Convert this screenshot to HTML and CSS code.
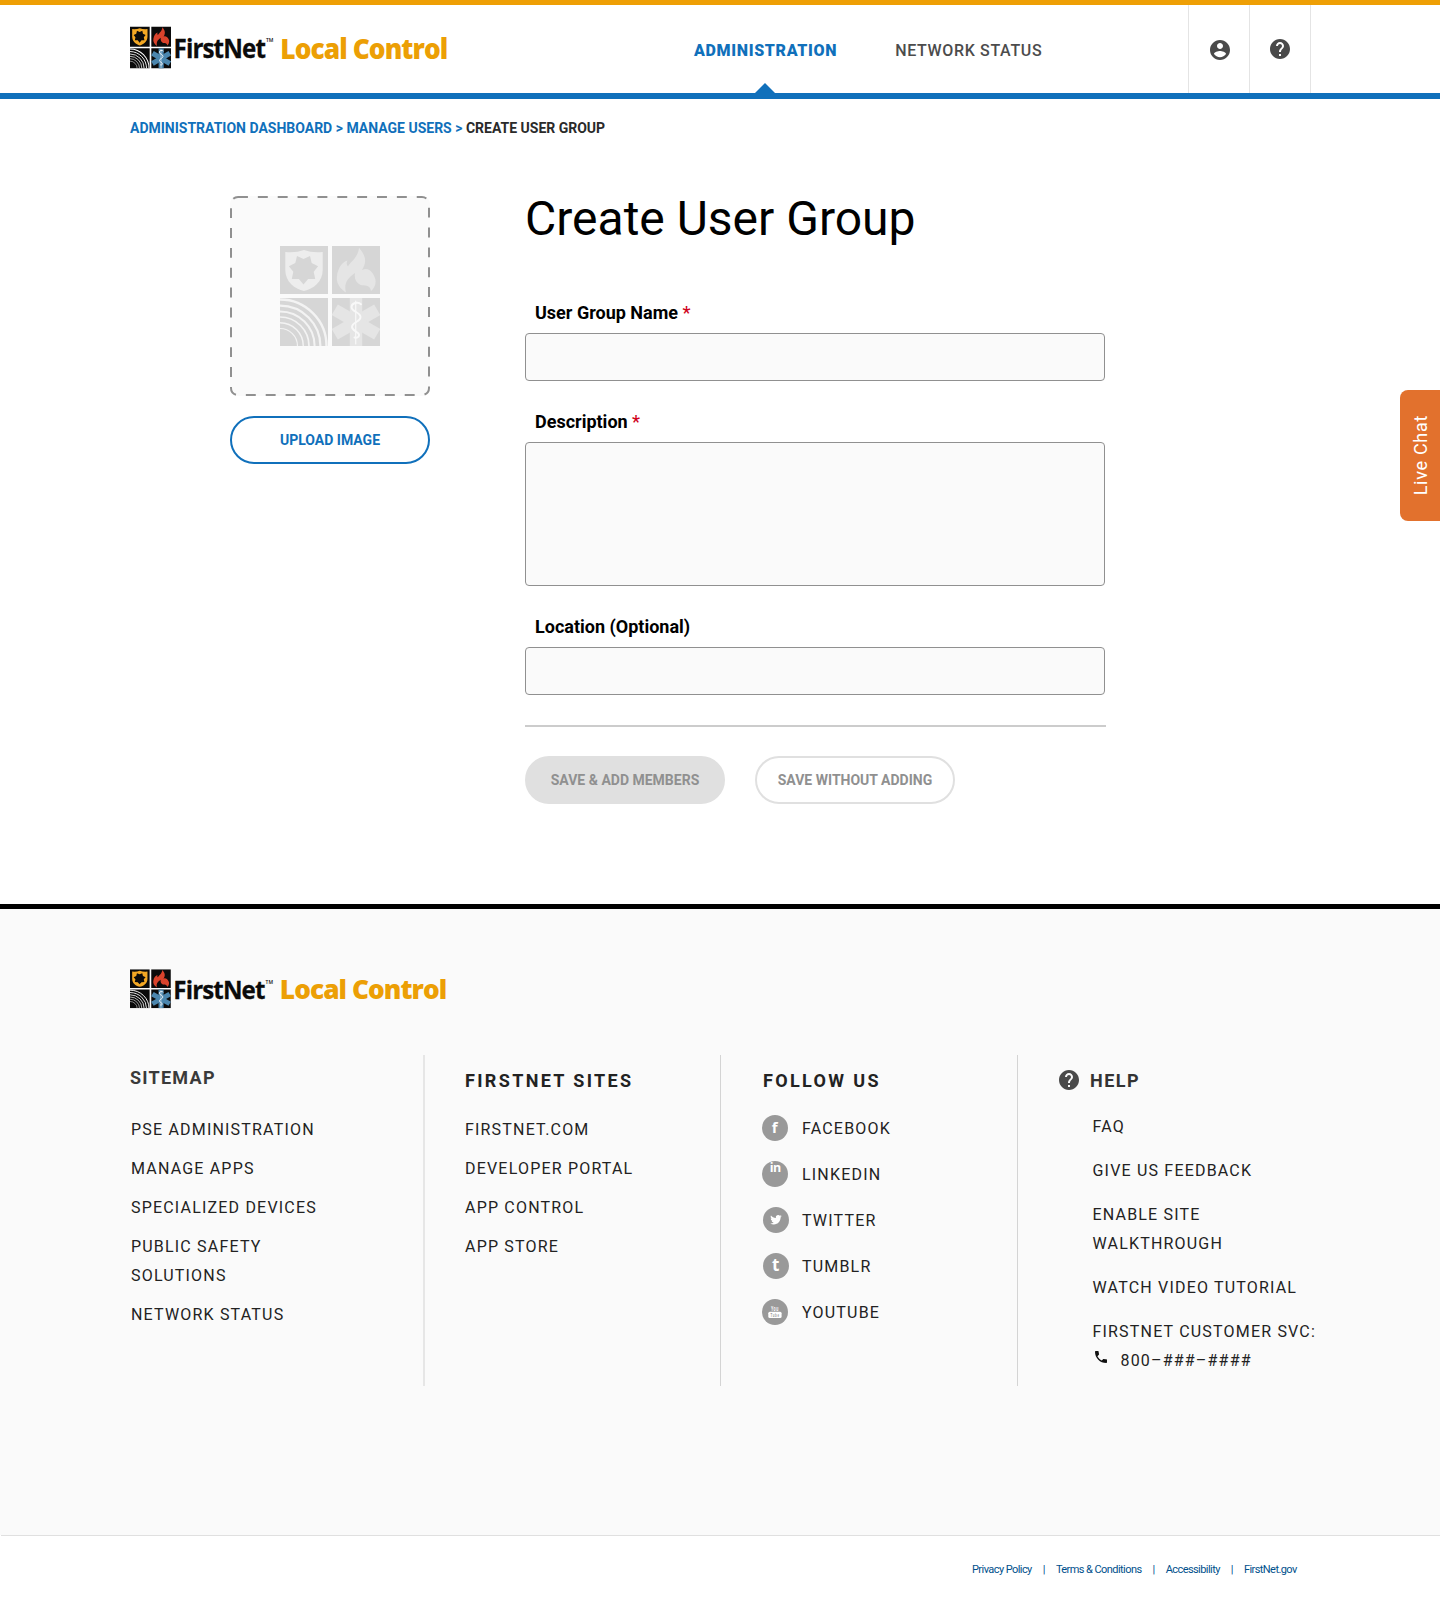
FILE: index.html
```html
<!DOCTYPE html>
<html lang="en">
<head>
<meta charset="utf-8">
<title>Create User Group</title>
<link rel="stylesheet" href="styles.css">
</head>
<body>
<svg class="sprite" aria-hidden="true">
  <symbol id="mark" viewBox="0 0 100 100" preserveAspectRatio="none">
    <g class="mark-tile"><path d="M0 0h48v48H0zM52 0h48v48H52zM0 52h48v48H0zM52 52h48v48H52z"/></g>
    <path class="mark-shield" d="M5.3 6Q16 7 24 4Q32 7 42.7 6V24C42.7 36 33 43 24 45C15 43 5.3 36 5.3 24Z"/>
    <path class="mark-tile" d="M23.5 38.5L28.1 33L35.2 32.9L33.7 25.8L38.1 20.2L31.7 17L30 10L23.5 13L17 10L15.3 17L8.9 20.2L13.3 25.8L11.8 32.9L18.9 33Z"/>
    <path class="mark-flame" d="M79 1.7C86 10 87 16 82 24C89 20 94 28 95.3 33C96.5 38 94 43 91 45C90 38 84 40 80.5 39C76 37 74 33 75 27C66 33 64 39 66 46.5C59 42 56 36 57 30C58 22 62 16 67.5 14.5C66 17 67 19 68 20.5C70 16 78 12 79 1.7Z"/>
    <g class="mark-wave">
      <path stroke-width="1.2" d="M0 82.5A17.5 17.5 0 0 1 17.5 100"/>
      <path stroke-width="1.4" d="M0 76.7A23.3 23.3 0 0 1 23.3 100"/>
      <path stroke-width="1.7" d="M0 71A29 29 0 0 1 29 100"/>
      <path stroke-width="2" d="M0 65.4A34.6 34.6 0 0 1 34.6 100"/>
      <path stroke-width="2.2" d="M0 59.6A40.4 40.4 0 0 1 40.4 100"/>
      <path stroke-width="2.4" d="M0 53.5A46.5 46.5 0 0 1 46.5 100"/>
    </g>
    <g class="mark-star">
      <rect x="69.8" y="52" width="12.4" height="48"/>
      <rect x="69.8" y="51.5" width="12.4" height="49" transform="rotate(60 76 76)"/>
      <rect x="69.8" y="51.5" width="12.4" height="49" transform="rotate(-60 76 76)"/>
    </g>
    <g class="mark-snake">
      <path stroke-width="1.2" d="M75.7 55V98"/>
      <path stroke-width="2" d="M81 58.2C78 55.5 71.5 57 71.5 61C71.5 66 80.5 66 80.5 71C80.5 76 72 76 72 81C72 85 79 85.5 79 89C79 91.5 76.5 92 74.5 91.5"/>
    </g>
  </symbol>
  <symbol id="help" viewBox="2 2 20 20"><path d="M12 2C6.48 2 2 6.48 2 12s4.48 10 10 10 10-4.48 10-10S17.52 2 12 2zm1 17h-2v-2h2v2zm2.07-7.75l-.9.92C13.45 12.9 13 13.5 13 15h-2v-.5c0-1.1.45-2.1 1.17-2.83l1.24-1.26c.37-.36.59-.86.59-1.41 0-1.1-.9-2-2-2s-2 .9-2 2H8c0-2.21 1.79-4 4-4s4 1.79 4 4c0 .88-.36 1.68-.93 2.25z"/></symbol>
</svg>

<header class="header">
  <a class="brand">
    <svg class="logo" viewBox="0 0 325 50" preserveAspectRatio="none">
      <use class="mark-color" href="#mark" x="0" y="3.5" width="41" height="42"/>
      <text class="logo-name" x="43.5" y="35" textLength="91.5" lengthAdjust="spacingAndGlyphs">FirstNet</text>
      <text class="logo-tm" x="136" y="19">TM</text>
      <text class="logo-product" x="150.3" y="35.5" textLength="167" lengthAdjust="spacingAndGlyphs">Local Control</text>
    </svg>
  </a>
  <nav class="nav">
    <a class="nav-item nav-item-active">ADMINISTRATION</a>
    <a class="nav-item">NETWORK STATUS</a>
  </nav>
  <div class="tools">
    <a class="tool"><svg class="icon20 icon-user" viewBox="2 2 20 20"><path d="M12 2C6.48 2 2 6.48 2 12s4.48 10 10 10 10-4.48 10-10S17.52 2 12 2zm0 3c1.66 0 3 1.34 3 3s-1.34 3-3 3-3-1.34-3-3 1.34-3 3-3zm0 14.2c-2.5 0-4.71-1.28-6-3.22.03-1.99 4-3.08 6-3.08 1.99 0 5.97 1.09 6 3.08-1.29 1.94-3.5 3.22-6 3.22z"/></svg></a>
    <a class="tool"><svg class="icon20 icon-help"><use href="#help"/></svg></a>
  </div>
</header>

<main class="main">
  <div class="crumbs"><a>ADMINISTRATION DASHBOARD</a> <a>&gt;</a> <a>MANAGE USERS</a> <a>&gt;</a> <span>CREATE USER GROUP</span></div>
  <div class="content">
    <aside class="picture">
      <div class="drop">
        <svg class="drop-frame" viewBox="0 0 200 200"><rect x="1" y="1" width="198" height="198" rx="7"/></svg>
        <svg class="drop-mark mark-gray"><use href="#mark" width="100" height="100"/></svg>
      </div>
      <button class="btn btn-primary">UPLOAD IMAGE</button>
    </aside>
    <form class="form">
      <h1>Create User Group</h1>
      <label>User Group Name <i>*</i></label>
      <input type="text">
      <label>Description <i>*</i></label>
      <textarea></textarea>
      <label>Location (Optional)</label>
      <input type="text">
      <hr>
      <div class="actions">
        <button class="btn btn-filled">SAVE &amp; ADD MEMBERS</button>
        <button class="btn btn-ghost">SAVE WITHOUT ADDING</button>
      </div>
    </form>
  </div>
</main>

<footer class="footer">
  <svg class="logo logo-footer" viewBox="0 0 325 50" preserveAspectRatio="none">
    <use class="mark-color" href="#mark" x="0" y="3.5" width="41" height="42"/>
    <text class="logo-name" x="43.5" y="35" textLength="91.5" lengthAdjust="spacingAndGlyphs">FirstNet</text>
    <text class="logo-tm" x="136" y="19">TM</text>
    <text class="logo-product" x="150.3" y="35.5" textLength="167" lengthAdjust="spacingAndGlyphs">Local Control</text>
  </svg>
  <div class="cols">
    <section class="col col-sitemap">
      <h2>SITEMAP</h2>
      <ul>
        <li>PSE ADMINISTRATION</li>
        <li>MANAGE APPS</li>
        <li>SPECIALIZED DEVICES</li>
        <li>PUBLIC SAFETY<br>SOLUTIONS</li>
        <li>NETWORK STATUS</li>
      </ul>
    </section>
    <section class="col col-sites">
      <h2>FIRSTNET SITES</h2>
      <ul>
        <li>FIRSTNET.COM</li>
        <li>DEVELOPER PORTAL</li>
        <li>APP CONTROL</li>
        <li>APP STORE</li>
      </ul>
    </section>
    <section class="col col-follow">
      <h2>FOLLOW US</h2>
      <ul>
        <li><svg class="social" viewBox="0 0 26 26"><circle cx="13" cy="13" r="13"/><text class="glyph-f" x="9.8" y="18">f</text></svg>FACEBOOK</li>
        <li><svg class="social" viewBox="0 0 26 26"><circle cx="13" cy="13" r="13"/><text class="glyph-in" x="7.8" y="11">in</text></svg>LINKEDIN</li>
        <li><svg class="social social-shift" viewBox="0 0 26 26"><circle cx="13" cy="13" r="13"/><path transform="translate(7.2 7) scale(.48)" d="M23.95 4.57a10 10 0 0 1-2.82.77 4.96 4.96 0 0 0 2.16-2.72c-.95.55-2 .95-3.13 1.18a4.92 4.92 0 0 0-8.38 4.48C7.69 8.09 4.07 6.13 1.64 3.16a4.82 4.82 0 0 0-.67 2.48c0 1.7.87 3.21 2.19 4.1a4.9 4.9 0 0 1-2.23-.62v.06a4.92 4.92 0 0 0 3.95 4.83 4.96 4.96 0 0 1-2.21.08 4.94 4.94 0 0 0 4.6 3.42A9.87 9.87 0 0 1 0 19.54a14 14 0 0 0 7.55 2.21c9.05 0 14-7.5 14-13.98 0-.21 0-.42-.02-.63a9.94 9.94 0 0 0 2.42-2.57z"/></svg>TWITTER</li>
        <li><svg class="social social-shift" viewBox="0 0 26 26"><circle cx="13" cy="13" r="13"/><text class="glyph-t" x="8.9" y="18.3">t</text></svg>TUMBLR</li>
        <li><svg class="social" viewBox="0 0 26 26"><circle cx="13" cy="13" r="13"/><text class="glyph-you" x="9" y="12" textLength="8" lengthAdjust="spacingAndGlyphs">You</text><rect x="6.3" y="12.8" width="13.3" height="6.2" rx="1.5"/><text class="glyph-tube" x="8.6" y="18" textLength="9" lengthAdjust="spacingAndGlyphs">Tube</text></svg>YOUTUBE</li>
      </ul>
    </section>
    <section class="col col-help">
      <h2><svg class="icon20"><use href="#help"/></svg>HELP</h2>
      <ul>
        <li>FAQ</li>
        <li>GIVE US FEEDBACK</li>
        <li>ENABLE SITE<br>WALKTHROUGH</li>
        <li>WATCH VIDEO TUTORIAL</li>
        <li>FIRSTNET CUSTOMER SVC:<div class="phone"><svg viewBox="3 3 18 18"><path d="M6.62 10.79c1.44 2.83 3.76 5.14 6.59 6.59l2.2-2.2c.27-.27.67-.36 1.02-.24 1.12.37 2.33.57 3.57.57.55 0 1 .45 1 1V20c0 .55-.45 1-1 1-9.39 0-17-7.61-17-17 0-.55.45-1 1-1h3.5c.55 0 1 .45 1 1 0 1.25.2 2.45.57 3.57.11.35.03.74-.25 1.02l-2.2 2.2z"/></svg>800–###–####</div></li>
      </ul>
    </section>
  </div>
</footer>

<div class="legal"><a>Privacy Policy</a><span>|</span><a>Terms &amp; Conditions</a><span>|</span><a>Accessibility</a><span>|</span><a>FirstNet.gov</a></div>

<a class="chat"><span>Live Chat</span></a>
</body>
</html>
```
FILE: styles.css
```css
* { box-sizing: border-box; }
body { margin: 0; width: 1440px; height: 1610px; background: #fff; font-family: Roboto, sans-serif; color: #000; overflow: hidden; position: relative; }
h1, h2, ul { margin: 0; padding: 0; }
ul { list-style: none; }
.sprite { position: absolute; width: 0; height: 0; }

/* brand mark */
.mark-color { --tile: #0b0b0b; --shield: #f3a824; --flame: #d9432c; --wave: #fff; --star: #4b86ae; --snake: #fff; }
.mark-gray { --tile: #d6d6d6; --shield: #ededed; --flame: #e5e5e5; --wave: #f3f3f3; --star: #e5e5e5; --snake: #f8f8f8; }
.mark-tile { fill: var(--tile); }
.mark-shield { fill: var(--shield); }
.mark-flame { fill: var(--flame); }
.mark-wave { fill: none; stroke: var(--wave); }
.mark-star { fill: var(--star); }
.mark-snake { fill: none; stroke: var(--snake); stroke-linecap: round; }
.logo { display: block; width: 325px; height: 50px; overflow: visible; }
.logo-name { font: 700 27.5px "Open Sans", sans-serif; letter-spacing: -1px; fill: #0b0b0b; stroke: #0b0b0b; stroke-width: .3; }
.logo-tm { font: 600 5px "Open Sans", sans-serif; fill: #0b0b0b; }
.logo-product { font: 800 28px "Open Sans", sans-serif; letter-spacing: -1px; fill: #ec9f05; }

/* header */
.header { height: 99px; border-top: 5px solid #ee9f05; border-bottom: 6px solid #1070bb; display: flex; padding-left: 130px; }
.brand { width: 564px; padding-top: 18px; }
.nav { display: flex; gap: 58px; width: 494px; }
.nav-item { line-height: 91px; height: 88px; font-size: 16px; font-weight: 500; letter-spacing: .66px; color: #4c4c4c; }
.nav-item-active { font-weight: 900; color: #1070bb; position: relative; }
.nav-item-active::after { content: ""; position: absolute; left: 60.5px; bottom: 0; border: 10px solid transparent; border-top: 0; border-bottom-color: #1070bb; }
.tools { display: flex; }
.tool { width: 61px; border-left: 1px solid #e4e4e4; display: flex; justify-content: center; }
.tool:last-child { width: 62px; border-right: 1px solid #e4e4e4; }
.icon20 { width: 20px; height: 20px; fill: #4a4a4a; }
.icon-user { margin: 34.5px 0 0 2px; }
.icon-help { margin: 33.5px 0 0 0; }

/* main */
.main { height: 805px; padding: 19px 0 0 130px; }
.crumbs { font-size: 14px; line-height: 20px; font-weight: 700; color: #2a2a2a; }
.crumbs a { color: #1070bb; }
.content { display: flex; gap: 95px; padding: 58px 0 0 100px; }
.picture { width: 200px; display: flex; flex-direction: column; gap: 20px; }
.drop { width: 200px; height: 200px; display: grid; place-items: center; background: #fafafa; border-radius: 8px; }
.drop > svg { grid-area: 1 / 1; }
.drop-frame { width: 200px; height: 200px; fill: none; stroke: #909090; stroke-width: 2; stroke-dasharray: 9.93; }
.drop-mark { width: 100px; height: 100px; }
.btn { width: 200px; height: 48px; padding: 0; border-radius: 24px; border: 2px solid; font: 700 14px Roboto, sans-serif; }
.btn-primary { background: #fff; border-color: #1070bb; color: #1070bb; }
.btn-filled { background: #e0e0e0; border-color: #e0e0e0; color: #909090; }
.btn-ghost { background: #fff; border-color: #e0e0e0; color: #909090; }
.form { width: 580px; display: flex; flex-direction: column; }
h1 { font-size: 48px; font-weight: 400; line-height: 56px; margin: -5px 0 52px; }
label { font-size: 18px; font-weight: 700; line-height: 28px; padding-left: 10px; margin-bottom: 6px; height: 28px; }
label i { color: #d0021b; font-style: normal; font-weight: 500; }
input, textarea { display: block; width: 580px; height: 48px; border: 1px solid #909090; border-radius: 4px; background: #fafafa; margin: 0 0 27px; padding: 12px; resize: none; }
textarea { height: 144px; }
input:last-of-type { margin-bottom: 30px; }
hr { width: 581px; height: 2px; border: 0; margin: 0 0 29px; background: #ccc; }
.actions { display: flex; gap: 30px; }

/* footer */
.footer { height: 631px; border-top: 5px solid #000; background: #fafafa; padding: 57px 0 0 130px; color: #222; }
.logo-footer { height: 46.5px; width: 324px; }
.cols { display: grid; grid-template-columns: 295px 296px 297px 1fr; grid-template-rows: 331px; margin-top: 42.5px; }
.col { border-right: 1px solid #d4d4d4; }
.col-sitemap { border-right: 2px solid #e6e6e6; }
.col-help { border: 0; }
h2 { font-size: 18px; font-weight: 700; line-height: 24px; letter-spacing: 1.5px; }
li { font-size: 16px; line-height: 29px; letter-spacing: 1.19px; margin-bottom: 10px; }
.col-sitemap h2 { padding-top: 11px; color: #3a3a3a; letter-spacing: 1.25px; }
.col-sitemap ul { padding: 25px 0 0 1px; }
.col-sites { padding-left: 40px; }
.col-sites h2, .col-follow h2, .col-help h2 { padding-top: 14px; }
.col-sites h2, .col-follow h2 { letter-spacing: 2.35px; }
.col-sites ul { padding-top: 22px; }
.col-follow { padding-left: 42px; }
.col-follow ul { padding-top: 20.5px; }
.col-follow li { display: flex; align-items: center; margin: 0 0 17px; }
.social { width: 26px; height: 26px; margin: 0 14px 0 -1px; overflow: visible; }
.social-shift { margin: 0 13px 0 0; }
.social circle { fill: #999; }
.social path, .social text, .social rect { fill: #fff; }
.glyph-f { font: 700 15px "Open Sans", sans-serif; }
.glyph-in { font: 700 12.5px "Open Sans", sans-serif; letter-spacing: -.6px; }
.glyph-t { font: 700 17px "Open Sans", sans-serif; }
.glyph-you { font: 700 7px "Liberation Sans", sans-serif; }
.social .glyph-tube { font: 700 5.5px "Liberation Sans", sans-serif; fill: #999; }
.col-help { padding-left: 41px; }
.col-help h2 { display: flex; align-items: center; gap: 11px; color: #333; }
.col-help h2 svg { margin-top: -2px; }
.col-help ul { padding: 19px 0 0 33.5px; }
.col-help li { margin-bottom: 15px; white-space: nowrap; }
.phone { display: flex; align-items: center; gap: 14px; }
.phone svg { width: 12px; height: 12px; margin: -7px 0 0 2px; fill: #111; }

/* legal strip */
.legal { height: 75px; margin-left: 1px; border-top: 1px solid #e0e0e0; display: flex; gap: 11px; padding: 26px 0 0 971px; font-size: 11px; line-height: 15px; letter-spacing: -.57px; color: #00508c; }

/* chat tab, floats over the page edge */
.chat { position: absolute; right: 0; top: 390px; width: 40px; height: 131px; border-radius: 8px 0 0 8px; background: #e2712d; color: #fff; display: flex; align-items: center; justify-content: center; }
.chat span { writing-mode: vertical-rl; transform: rotate(180deg); font: 400 18px Roboto, sans-serif; letter-spacing: .7px; }
```
